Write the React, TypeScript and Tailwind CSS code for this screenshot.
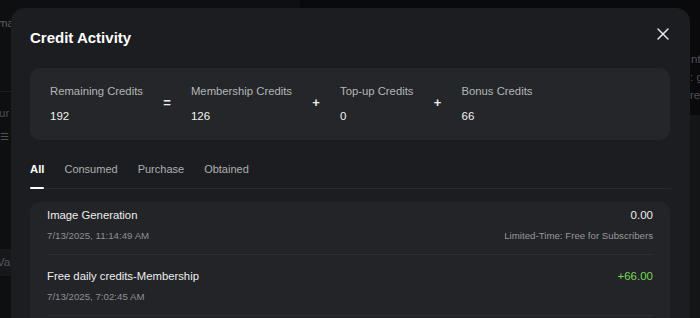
import React from "react";

const font = { fontFamily: '"Liberation Sans", Arial, sans-serif' };

function Stat({ label, value }: { label: string; value: string }) {
  return (
    <div className="flex flex-col gap-[9px]">
      <div className="text-[11.3px] leading-[16px] text-[#b4b5b7] whitespace-nowrap">{label}</div>
      <div className="text-[11.5px] leading-[16px] text-[#f2f2f2]">{value}</div>
    </div>
  );
}

function Op({ children }: { children: React.ReactNode }) {
  return (
    <div className="self-center -mt-[1px] text-[13px] leading-[16px] font-bold text-[#ececec] w-[8px] text-center">{children}</div>
  );
}

function Tab({ label, active }: { label: string; active?: boolean }) {
  return (
    <div className="flex flex-col items-start -mb-px">
      <div
        className={
          active
            ? "text-[11.3px] leading-[16px] font-bold text-white"
            : "text-[11px] leading-[16px] text-[#aeafb1]"
        }
      >
        {label}
      </div>
      <div className={active ? "mt-[10px] h-[2px] w-full rounded-full bg-white" : "mt-[10px] h-[2px] w-full bg-transparent"} />
    </div>
  );
}

function Row({
  title,
  date,
  amount,
  note,
  green,
  first,
}: {
  title: string;
  date: string;
  amount: string;
  note?: string;
  green?: boolean;
  first?: boolean;
}) {
  return (
    <div
      className={
        (first ? "pt-[5.5px] " : "pt-[12.5px] ") +
        "pb-[11px] border-b border-[#2e2f32] flex justify-between"
      }
    >
      <div className="flex flex-col gap-[6px]">
        <div className="text-[11.3px] leading-[16px] text-[#eeeeee]">{title}</div>
        <div className="text-[9.7px] leading-[14px] text-[#8e8f92]">{date}</div>
      </div>
      <div className="flex flex-col items-end gap-[6px]">
        <div className={"text-[11.5px] leading-[16px] " + (green ? "text-[#74d856]" : "text-[#eeeeee]")}>{amount}</div>
        {note ? <div className="text-[9.7px] leading-[14px] text-[#97989b]">{note}</div> : null}
      </div>
    </div>
  );
}

export default function App() {
  return (
    <div className="relative w-[700px] h-[318px] overflow-hidden bg-[#0c0d0f]" style={font}>
      {/* background page (dimmed) */}
      <div className="flex h-full w-full">
        <div className="w-[300px] h-full flex flex-col bg-[#0e0f11]">
          <div className="pt-[16px] h-[92px] border-b border-[#1c1d1f] text-[11.5px] leading-[14px] text-[#5e5f62] -ml-[2px]">ma</div>
          <div className="pt-[14px] text-[11.5px] leading-[14px] text-[#4f5053] -ml-[1px]">ur</div>
          <div className="pt-[10px] text-[11.5px] leading-[14px] text-[#4f5053] flex items-center gap-[2px]">
            <span className="text-[10px]">☰</span>c
          </div>
          <div className="mt-[105px] h-[27px] bg-[#17181a] flex items-center text-[11.5px] text-[#56575a] -ml-[3px]">Var</div>
        </div>
        <div className="flex-1 h-full flex flex-col">
          <div className="h-[115px] bg-[#0a0a0c] flex flex-col items-end pr-0 pt-[50px] text-[11.5px] leading-[18px] text-[#505154]">
            <div className="w-[10px] pl-[1px] whitespace-nowrap overflow-hidden">nt</div>
            <div className="w-[10px] whitespace-nowrap overflow-hidden">: g</div>
            <div className="w-[10px] whitespace-nowrap overflow-hidden">re</div>
          </div>
          <div className="flex-1 bg-[#141517]" />
        </div>
      </div>

      {/* modal */}
      <div className="absolute left-[11px] top-[8px] w-[679px] h-[340px] rounded-[14px] bg-[#1c1d20] pl-[19px] pr-[20px] pt-[20px]">
        <div className="text-[15px] leading-[19px] font-bold text-white">Credit Activity</div>
        <button className="absolute top-[16px] right-[17px] w-[20px] h-[20px] flex items-center justify-center text-[#e8e8e8]">
          <svg width="20" height="20" viewBox="0 0 24 24" fill="none" stroke="currentColor" strokeWidth="1.7" strokeLinecap="round">
            <path d="M18 6 6 18" />
            <path d="m6 6 12 12" />
          </svg>
        </button>

        <div className="mt-[21px] h-[72px] rounded-[10px] bg-[#252629] px-[20px] pt-[15px] pb-[16px] flex gap-[20px]">
          <Stat label="Remaining Credits" value="192" />
          <Op>=</Op>
          <Stat label="Membership Credits" value="126" />
          <Op>+</Op>
          <Stat label="Top-up Credits" value="0" />
          <Op>+</Op>
          <Stat label="Bonus Credits" value="66" />
        </div>

        <div className="mt-[21px] flex gap-[20px] border-b border-[#2a2b2e] w-[641px]">
          <Tab label="All" active />
          <Tab label="Consumed" />
          <Tab label="Purchase" />
          <Tab label="Obtained" />
        </div>

        <div className="mt-[12.5px] rounded-[9px] bg-[#232427] px-[17px] h-[200px]">
          <Row
            first
            title="Image Generation"
            date="7/13/2025, 11:14:49 AM"
            amount="0.00"
            note="Limited-Time: Free for Subscribers"
          />
          <Row title="Free daily credits-Membership" date="7/13/2025, 7:02:45 AM" amount="+66.00" green />
        </div>
      </div>
    </div>
  );
}
